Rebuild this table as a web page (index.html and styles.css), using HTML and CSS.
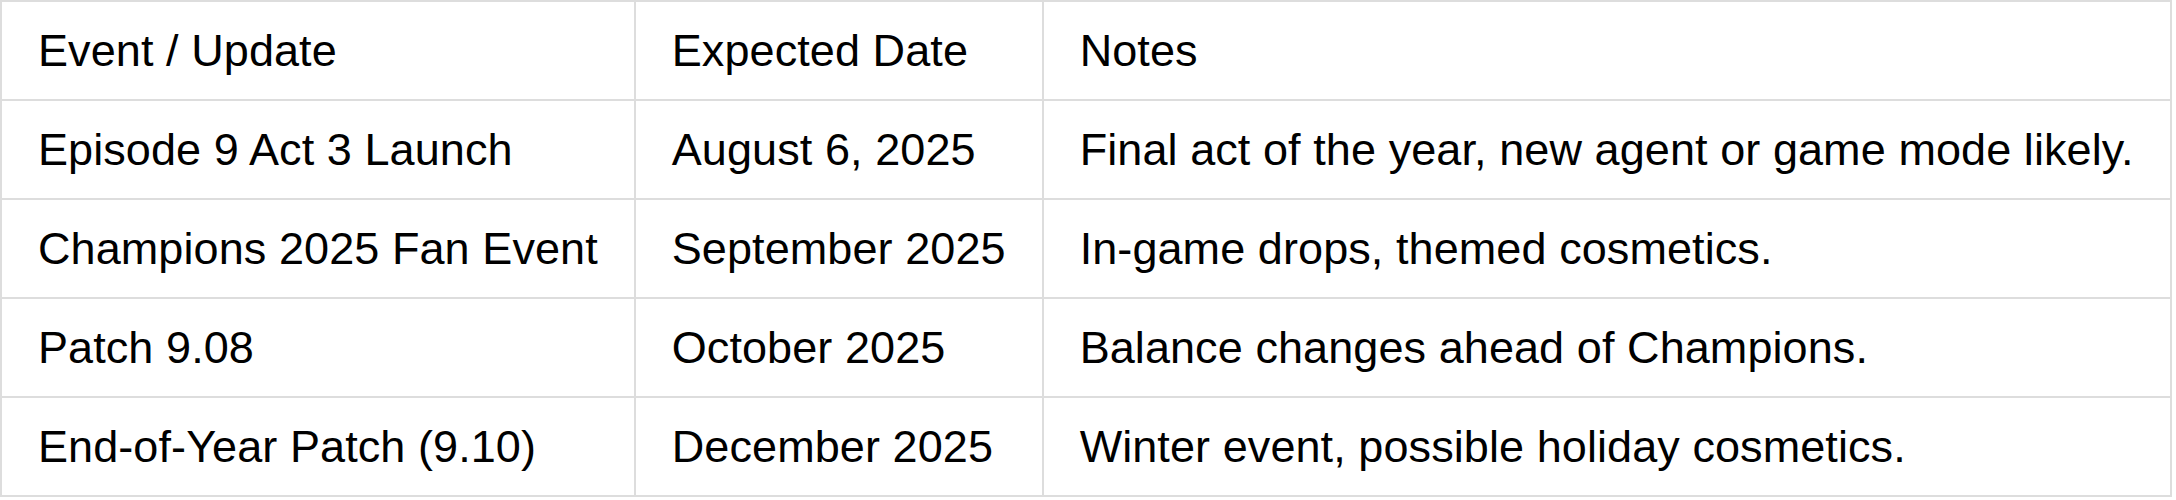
FILE: index.html
```html
<!DOCTYPE html>
<html lang="en">
<head>
<meta charset="utf-8">
<title>Schedule</title>
<link rel="stylesheet" href="styles.css">
</head>
<body>
<table class="schedule">
  <tr><td>Event / Update</td><td>Expected Date</td><td>Notes</td></tr>
  <tr><td>Episode 9 Act 3 Launch</td><td>August 6, 2025</td><td>Final act of the year, new agent or game mode likely.</td></tr>
  <tr><td>Champions 2025 Fan Event</td><td>September 2025</td><td>In-game drops, themed cosmetics.</td></tr>
  <tr><td>Patch 9.08</td><td>October 2025</td><td>Balance changes ahead of Champions.</td></tr>
  <tr><td>End-of-Year Patch (9.10)</td><td>December 2025</td><td>Winter event, possible holiday cosmetics.</td></tr>
</table>
</body>
</html>
```
FILE: styles.css
```css
html, body {
  margin: 0;
  padding: 0;
  background: #fff;
}
.schedule {
  border-collapse: collapse;
  font-family: "Liberation Sans", Arial, sans-serif;
  font-size: 45px;
  letter-spacing: 0.08px;
  color: #000;
}
.schedule td {
  border: 2px solid #ddd;
  padding: 22.5px 36px;
  text-align: left;
  white-space: nowrap;
}
```
